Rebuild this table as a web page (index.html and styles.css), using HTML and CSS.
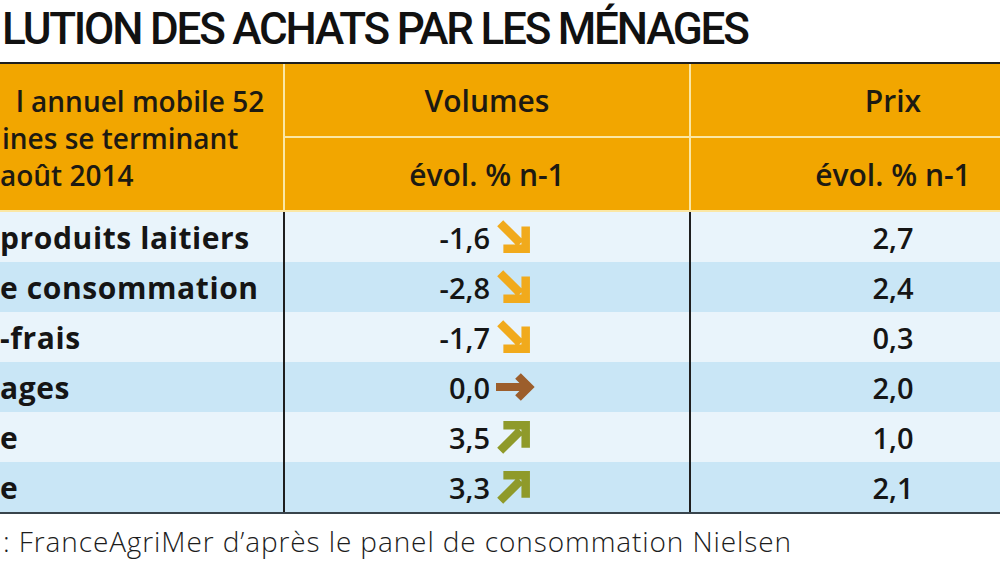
FILE: index.html
```html
<!DOCTYPE html>
<html lang="fr">
<head>
<meta charset="utf-8">
<title>Évolution des achats par les ménages</title>
<link rel="stylesheet" href="styles.css">
</head>
<body>
<div class="frame">
  <h1 class="title">LUTION DES ACHATS PAR LES MÉNAGES</h1>
  <div class="head">
    <div class="hcell period">
      <span>l annuel mobile 52</span>
      <span>ines se terminant</span>
      <span>août 2014</span>
    </div>
    <div class="hcell">Volumes</div>
    <div class="hcell">Prix</div>
    <div class="hcell">évol. % n-1</div>
    <div class="hcell">évol. % n-1</div>
  </div>
  <div class="body">
    <div class="row">
      <div class="cell label">produits laitiers</div>
      <div class="cell vol"><span class="num">-1,6</span><svg class="arr" viewBox="0 0 32 32"><path class="down" d="M3 3 L22 22 M27 6 V27 H6"/></svg></div>
      <div class="cell price">2,7</div>
    </div>
    <div class="row alt">
      <div class="cell label">e consommation</div>
      <div class="cell vol"><span class="num">-2,8</span><svg class="arr" viewBox="0 0 32 32"><path class="down" d="M3 3 L22 22 M27 6 V27 H6"/></svg></div>
      <div class="cell price">2,4</div>
    </div>
    <div class="row">
      <div class="cell label">-frais</div>
      <div class="cell vol"><span class="num">-1,7</span><svg class="arr" viewBox="0 0 32 32"><path class="down" d="M3 3 L22 22 M27 6 V27 H6"/></svg></div>
      <div class="cell price">0,3</div>
    </div>
    <div class="row alt">
      <div class="cell label">ages</div>
      <div class="cell vol"><span class="num">0,0</span><svg class="arr wide" viewBox="0 0 40 32"><path class="flat" d="M1 16 H32 M23 5 L34 16 L23 27"/></svg></div>
      <div class="cell price">2,0</div>
    </div>
    <div class="row">
      <div class="cell label">e</div>
      <div class="cell vol"><span class="num">3,5</span><svg class="arr" viewBox="0 0 32 32"><path class="up" d="M3 29 L22 10 M6 5 H27 V26"/></svg></div>
      <div class="cell price">1,0</div>
    </div>
    <div class="row alt">
      <div class="cell label">e</div>
      <div class="cell vol"><span class="num">3,3</span><svg class="arr" viewBox="0 0 32 32"><path class="up" d="M3 29 L22 10 M6 5 H27 V26"/></svg></div>
      <div class="cell price">2,1</div>
    </div>
  </div>
  <p class="source">: FranceAgriMer d’après le panel de consommation Nielsen</p>
</div>
</body>
</html>
```

FILE: styles.css
```css
html, body {
  margin: 0;
  padding: 0;
  background: #ffffff;
}

.frame {
  width: 1000px;
  height: 562px;
  overflow: hidden;
  font-family: "Open Sans", "Noto Sans", sans-serif;
  color: #1a1a1a;
}

.title {
  margin: 0;
  height: 62px;
  padding-left: 2px;
  font-family: Roboto, "Open Sans", sans-serif;
  font-size: 44px;
  font-weight: 500;
  line-height: 58px;
  letter-spacing: -2.2px;
  white-space: nowrap;
  color: #111111;
}

.head {
  width: 1095px;
  display: grid;
  grid-template-columns: 283px 404px 404px;
  grid-template-rows: 72px 72px;
  gap: 2px;
  background: #fbe7a4;
  border-top: 2px solid #1e1e1e;
  padding-bottom: 2px;
}

.hcell {
  background: #f2a600;
  display: flex;
  align-items: center;
  justify-content: center;
  font-size: 30px;
  font-weight: 600;
  color: #1d1a12;
  white-space: nowrap;
}

.period {
  grid-row: 1 / 3;
  flex-direction: column;
  align-items: flex-start;
  justify-content: center;
  font-size: 28px;
  line-height: 37px;
  padding-top: 2px;
}

.period span:first-child { padding-left: 16px; }
.period span:nth-child(2) { padding-left: 2px; }

.body {
  width: 1095px;
  border-bottom: 2px solid #38444c;
}

.row {
  display: grid;
  grid-template-columns: 283px 404px 404px;
  column-gap: 2px;
  height: 50px;
  background: #1e1e1e;
}

.cell {
  background: #e9f4fb;
  display: flex;
  align-items: center;
  font-size: 29px;
  white-space: nowrap;
  color: #151515;
}

.row.alt .cell {
  background: #c9e6f6;
}

.label {
  font-size: 30px;
  font-weight: 700;
  letter-spacing: 0.6px;
}

.vol {
  justify-content: flex-start;
  font-weight: 600;
}

.num {
  width: 205px;
  text-align: right;
}

.arr {
  width: 34px;
  height: 34px;
  margin-left: 7px;
}

.arr.wide {
  width: 40px;
  height: 32px;
  margin-left: 5px;
}

.arr path {
  fill: none;
  stroke-width: 8;
  stroke-linejoin: miter;
  stroke-linecap: butt;
}

.arr .down { stroke: #f1aa1c; }
.arr .flat { stroke: #9c5e2c; }
.arr .up { stroke: #8f9a2a; }

.price {
  justify-content: center;
  font-weight: 600;
}

.source {
  margin: 0;
  padding: 8px 0 0 3px;
  font-size: 28px;
  font-weight: 300;
  letter-spacing: 0.9px;
  color: #1c1c1c;
  white-space: nowrap;
}
```
